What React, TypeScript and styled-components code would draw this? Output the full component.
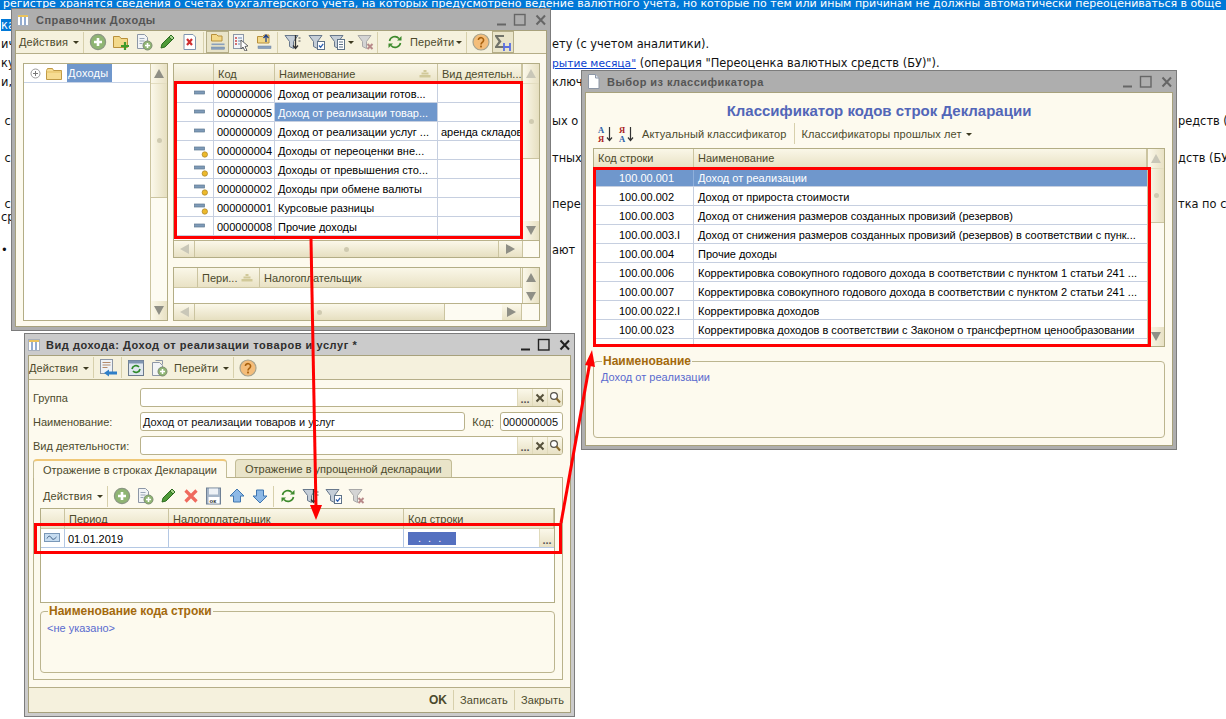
import React from 'react';
import styled, { createGlobalStyle } from 'styled-components';

const GlobalStyle = createGlobalStyle`
  html, body { margin: 0; padding: 0; background: #fff; overflow: hidden; }
  * { box-sizing: border-box; }
`;

const Page = styled.div`
  position: relative; width: 1226px; height: 719px; overflow: hidden; background: #fff;
  font-family: "Liberation Sans", Arial, sans-serif; font-size: 11px; color: #000;
`;

/* ---------- background document ---------- */
const Doc = styled.div`
  margin-top: -8px; font-family: "DejaVu Sans", sans-serif; font-size: 11.4px; color: #111;
`;
const DocLine = styled.div<{ $h?: number; $mt?: number }>`
  display: grid; grid-template-columns: 551px 626px 1fr;
  height: ${p => p.$h ?? 19}px; line-height: ${p => p.$h ?? 19}px; margin-top: ${p => p.$mt ?? 0}px;
  white-space: nowrap;
`;
const DocCell = styled.div` overflow: hidden; padding-left: 1px; `;
const Selected = styled.span` background: #0078d7; color: #fff; display: inline-block; `;
const TopSelected = styled.div`
  height: 18px; line-height: 23px; background: #0078d7; color: #fff; white-space: nowrap; padding-left: 3px; overflow: hidden;
  font-family: "DejaVu Sans", sans-serif; font-size: 11px;
`;
const DocLink = styled.a` color: #0a3fcf; text-decoration: underline; font-size: 10.7px; `;

/* ---------- window ---------- */
const Win = styled.div<{ $x: number; $y: number; $w: number; $h: number; $light?: boolean }>`
  position: absolute; left: ${p => p.$x}px; top: ${p => p.$y}px; width: ${p => p.$w}px; height: ${p => p.$h}px;
  display: flex; flex-direction: column; padding: 0 3px 3px;
  background: ${p => (p.$light ? '#cbcbcb' : '#aeaeae')};
  border: 1px solid #7c7c7c;
`;
const TitleBar = styled.div<{ $pl?: number; $gap?: number }>`
  height: 21px; flex: none; display: flex; align-items: center; gap: ${p => p.$gap ?? 7}px; padding: 0 0 0 ${p => p.$pl ?? 2}px;
`;
const TitleText = styled.div<{ $light?: boolean }>`
  flex: 1; font-weight: bold; font-size: 11px; color: ${p => (p.$light ? '#2e2e2e' : '#555')};
  white-space: nowrap; letter-spacing: ${p => (p.$light ? 0.55 : 0.45)}px;
`;
const WinBody = styled.div`
  flex: 1; min-height: 0; display: flex; flex-direction: column; background: #fdfaee; border: 1px solid #a7a17c;
`;

/* ---------- toolbars ---------- */
const ToolBar = styled.div<{ $h?: number; $border?: boolean; $flat?: boolean; $pl?: number }>`
  flex: none; height: ${p => p.$h ?? 24}px; display: flex; align-items: center; padding-left: ${p => p.$pl ?? 3}px;
  background: ${p => (p.$flat ? 'transparent' : '#f5f1dd')};
  border-bottom: ${p => (p.$border ? '1px solid #b5ae88' : 'none')};
  color: #4c4a2c; white-space: nowrap;
`;
const ToolText = styled.span<{ $pl?: number; $pr?: number }>`
  padding: 0 ${p => p.$pr ?? 0}px 0 ${p => p.$pl ?? 0}px; letter-spacing: 0.1px;
`;
const Caret = styled.span<{ $ml?: number }>`
  width: 0; height: 0; border: 3px solid transparent; border-top: 3px solid #3d3a20; border-bottom: 0;
  margin: 1px 2px 0 ${p => p.$ml ?? 5}px; flex: none;
`;
const Sep = styled.span` width: 1px; height: 21px; background: #d7d0ac; margin: 0 2px; flex: none; `;
const IconBtn = styled.span<{ $w?: number; $on?: boolean }>`
  width: ${p => p.$w ?? 23}px; height: 22px; flex: none; display: flex; align-items: center; justify-content: center;
  ${p => p.$on && 'background: #e9e4c9; border: 1px solid #b4ad87;'}
`;

/* ---------- scrollbars ---------- */
const VScroll = styled.div<{ $w?: number }>`
  flex: none; width: ${p => p.$w ?? 17}px; display: flex; flex-direction: column; background: #fdfbf2; border-left: 1px solid #cbc4a0;
`;
const VBtn = styled.div`
  flex: none; height: 19px; display: flex; align-items: center; justify-content: center;
  background: linear-gradient(90deg, #fbf8ea, #e8e1c4);
`;
const VThumb = styled.div<{ $h: number }>`
  flex: none; height: ${p => p.$h}px; display: flex; align-items: center; justify-content: center;
  background: linear-gradient(90deg, #fbf8ea, #e6dfc0); border-bottom: 1px solid #cbc4a0; border-top: 1px solid #e3ddc0;
`;
const Grip = styled.span` width: 5px; height: 5px; border-radius: 50%; background: #cfcab0; `;
const Spacer = styled.div` flex: 1; `;
const HScroll = styled.div`
  flex: none; height: 17px; display: flex; background: #fdfbf2; border-top: 1px solid #b9b28b;
`;
const HBtn = styled.div<{ $w: number }>`
  flex: none; width: ${p => p.$w}px; display: flex; align-items: center; justify-content: center;
  background: linear-gradient(180deg, #fbf8ea, #e8e1c4); border-right: 1px solid #cbc4a0;
`;
const HThumb = styled.div<{ $w: number }>`
  flex: none; width: ${p => p.$w}px; display: flex; align-items: center; justify-content: center;
  background: linear-gradient(180deg, #fbf8ea, #e6dfc0); border-right: 1px solid #cbc4a0;
`;
const HCorner = styled.div<{ $w: number }>` flex: none; width: ${p => p.$w}px; `;
const Arrow = styled.span<{ $dir: 'up' | 'down' | 'left' | 'right'; $dim?: boolean }>`
  width: 0; height: 0; border: 5px solid transparent;
  ${p => {
    const c = p.$dim ? '#c9c7b8' : '#8f8f86';
    if (p.$dir === 'up') return `border-top: 0; border-bottom: 9px solid ${c};`;
    if (p.$dir === 'down') return `border-bottom: 0; border-top: 9px solid ${c};`;
    if (p.$dir === 'left') return `border-left: 0; border-right: 9px solid ${c};`;
    return `border-right: 0; border-left: 9px solid ${c};`;
  }}
`;

/* ---------- grids ---------- */
const Panel = styled.div<{ $h?: number; $w?: number; $mt?: number }>`
  flex: ${p => (p.$h || p.$w ? 'none' : '1')}; min-height: 0; display: flex; flex-direction: column;
  ${p => p.$h && `height: ${p.$h}px;`} ${p => p.$w && `width: ${p.$w}px;`}
  margin-top: ${p => p.$mt ?? 0}px;
  border: 1px solid #b3ad85; background: #fff;
`;
const PanelMain = styled.div` flex: 1; min-height: 0; display: flex; `;
const GridArea = styled.div` flex: 1; min-width: 0; overflow: hidden; display: flex; flex-direction: column; `;
const HeadRow = styled.div<{ $cols: string; $h?: number }>`
  flex: none; display: grid; grid-template-columns: ${p => p.$cols}; height: ${p => p.$h ?? 20}px;
  background: linear-gradient(180deg, #faf7e8, #e9e2c5); border-bottom: 1px solid #cfc8a4;
  color: #4c4a2c;
`;
const HeadCell = styled.div`
  display: flex; align-items: center; justify-content: space-between; padding: 0 6px 0 4px; overflow: hidden;
  white-space: nowrap; border-right: 1px solid #cbc4a0;
`;
const Row = styled.div<{ $cols: string; $h?: number; $sel?: boolean; $line?: string }>`
  flex: none; display: grid; grid-template-columns: ${p => p.$cols}; height: ${p => p.$h ?? 19}px;
  border-bottom: 1px solid ${p => p.$line ?? '#c6cfe0'};
  ${p => p.$sel && 'background: #6f97cc; color: #fff;'}
`;
const Cell = styled.div<{ $sel?: boolean; $pl?: number; $line?: string }>`
  display: flex; align-items: center; padding: 1px 0 0 ${p => p.$pl ?? 3}px; overflow: hidden; white-space: nowrap;
  border-right: 1px solid ${p => p.$line ?? '#c6cfe0'};
  ${p => p.$sel && 'background: #6f97cc; color: #fff;'}
`;
const IconCell = styled(Cell)<{ $pr?: number }>` justify-content: flex-end; padding: 0 ${p => p.$pr ?? 5}px 0 0; `;

/* ---------- tree ---------- */
const TreeRow = styled.div`
  flex: none; height: 19px; display: flex; align-items: center; padding-left: 6px; gap: 5px; border-bottom: 1px solid #c6d2e6;
`;
const TreeLabel = styled.span` background: #6f97cc; color: #fff; height: 18px; line-height: 18px; padding: 0 4px 0 1px; letter-spacing: .2px;`;

/* ---------- form ---------- */
const Form = styled.div` flex: none; display: flex; flex-direction: column; gap: 5px; padding: 8px 7px 0 4px; `;
const FormRow = styled.div` height: 19px; display: flex; align-items: center; `;
const Label = styled.div<{ $w?: number; $ml?: number }>`
  width: ${p => (p.$w ? `${p.$w}px` : 'auto')}; flex: none; color: #4c4a2c; margin-left: ${p => p.$ml ?? 0}px; white-space: nowrap;
`;
const InputBox = styled.div<{ $w?: number; $ml?: number }>`
  ${p => (p.$w ? `width: ${p.$w}px; flex: none;` : 'flex: 1;')} height: 19px; display: flex; align-items: center;
  margin-left: ${p => p.$ml ?? 0}px;
  background: #fff; border: 1px solid #b9b28b; border-radius: 3px; padding-left: 2px; overflow: hidden; white-space: nowrap;
`;
const InputValue = styled.div` flex: 1; color: #111; `;
const FieldBtn = styled.div<{ $h?: number }>`
  flex: none; width: 15px; height: ${p => p.$h ?? 17}px; display: flex; align-items: center; justify-content: center;
  background: linear-gradient(180deg, #fbf8ea, #e8e1c4); border-left: 1px solid #e0dabb;
  font-weight: bold; color: #4c4a2c; line-height: 1;
`;
const Dots = styled.span` font-size: 11px; letter-spacing: 0; transform: translateY(2px); color: #555; `;

/* ---------- tabs ---------- */
const TabBar = styled.div` flex: none; display: flex; gap: 8px; margin: 4px 7px 0 4px; height: 18px; `;
const Tab = styled.div<{ $on?: boolean }>`
  padding: 0 9px; display: flex; align-items: center; border: 1px solid #c2bc96; border-bottom: 0; border-radius: 4px 4px 0 0;
  color: #4c4a2c; position: relative; z-index: ${p => (p.$on ? 1 : 0)};
  background: ${p => (p.$on ? '#fdfaee' : '#e9e4c9')};
  ${p => p.$on && 'border-top: 2px solid #f0c878; margin-bottom: -1px;'}
`;
const TabPane = styled.div`
  flex: none; height: 203px; margin: 0 7px 0 4px; border: 1px solid #b9b28b; padding: 6px 7px 6px 6px; display: flex; flex-direction: column;
`;
const Group = styled.fieldset<{ $h: number; $mt: number; $pl?: number }>`
  flex: none; height: ${p => p.$h}px; margin: ${p => p.$mt}px 0 0; padding: 0 0 0 ${p => p.$pl ?? 6}px; border: 1px solid #bcb58f; border-radius: 4px; min-width: 0;
`;
const Legend = styled.legend`
  font-weight: bold; color: #a3690c; padding: 0 1px; margin-left: 1px; font-size: 12px; line-height: 13px; white-space: nowrap;
`;
const GroupText = styled.div<{ $mt?: number }>` color: #5a6bcf; margin-top: ${p => p.$mt ?? 3}px; `;
const BottomBar = styled.div`
  flex: none; margin-top: auto; height: 25px; display: flex; justify-content: flex-end; align-items: center;
  background: #f5f1dd; border-top: 1px solid #b5ae88; color: #4c4a2c;
`;
const BarBtn = styled.span<{ $bold?: boolean }>`
  padding: 0 6px; font-weight: ${p => (p.$bold ? 'bold' : 'normal')}; font-size: ${p => (p.$bold ? 12 : 11)}px; letter-spacing: .1px;
  border-left: ${p => (p.$bold ? 'none' : '1px solid #d7d0ac')}; line-height: 20px;
`;
const Masked = styled.div`
  width: 48px; height: 13px; background: #5470c0; color: #fff; font-size: 11px; letter-spacing: 2px; padding-left: 10px; line-height: 12px;
`;
const EditCell = styled(Cell)` justify-content: space-between; padding: 0 0 0 4px; border-right: 0; `;

/* ---------- layouts of windows ---------- */
const ListLayout = styled.div` flex: 1; min-height: 0; display: flex; gap: 5px; padding: 9px 6px 5px 7px; `;
const RightCol = styled.div` flex: 1; min-width: 0; display: flex; flex-direction: column; gap: 9px; `;
const Heading = styled.div`
  flex: none; height: 32px; padding-top: 9px; text-align: center; font-weight: bold; font-size: 15px; line-height: 17px; color: #5266b8;
`;
const ClassBody = styled.div` flex: 1; min-height: 0; display: flex; flex-direction: column; padding: 0 7px 6px 7px; `;
const BlankFill = styled.div` flex: 1; `;

/* ---------- annotations ---------- */
const RedFrame = styled.div<{ $x: number; $y: number; $w: number; $h: number }>`
  position: absolute; left: ${p => p.$x}px; top: ${p => p.$y}px; width: ${p => p.$w}px; height: ${p => p.$h}px; border: 3px solid #ff0000; pointer-events: none;
`;
const ArrowLayer = styled.svg` position: absolute; left: 0; top: 0; pointer-events: none; `;

/* ---------- icons ---------- */
const S = ({ w = 18, h = 18, children }: { w?: number; h?: number; children: React.ReactNode }) => (
  <svg width={w} height={h} viewBox={`0 0 ${w} ${h}`} style={{ display: 'block', flex: 'none' }}>{children}</svg>
);
const GridIcon = () => (
  <S w={12} h={12}>
    <rect x=".5" y=".5" width="11" height="11" fill="#fff" stroke="#a8b0bc" />
    <rect x="1" y="1" width="10" height="2" fill="#e9c25c" />
    <path d="M4 3v8M8 3v8" stroke="#5a80b8" strokeWidth="1.3" />
  </S>
);
const DocTitleIcon = () => (
  <S w={13} h={15}>
    <path d="M1.5.5h7l3.5 3.5v10.5h-10.5z" fill="#fff" stroke="#8d97a6" />
    <path d="M8.5.5v3.5h3.5" fill="#dfe6f0" stroke="#8d97a6" />
  </S>
);
const WinBtns = ({ color }: { color: string }) => (
  <S w={54} h={16}>
    <path d="M4 12.5h9" stroke={color} strokeWidth="2" />
    <rect x="21.5" y="2.5" width="10.5" height="10.5" fill="none" stroke={color} strokeWidth="1.4" />
    <path d="M43.5 3.5l8.5 9M52 3.5l-8.5 9" stroke={color} strokeWidth="2" />
  </S>
);
const PlusCircle = () => (
  <S>
    <circle cx="9" cy="9" r="7.6" fill="#8fb573" stroke="#8a9782" strokeWidth="1.2" />
    <path d="M9 5v8M5 9h8" stroke="#fff" strokeWidth="2.6" />
  </S>
);
const FolderPlus = () => (
  <S>
    <path d="M1.5 3.5h6l1.5 2h6.5v9h-14z" fill="#f3d98a" stroke="#b8903a" />
    <path d="M13 9v8M9 13h8" stroke="#3f9b2c" strokeWidth="2.2" />
  </S>
);
const DocPlus = () => (
  <S>
    <path d="M2.5 1.5h7l3 3v11h-10z" fill="#f2f4f6" stroke="#8d97a6" />
    <path d="M4.5 5.5h5M4.5 8h5M4.5 10.5h3" stroke="#9aa6b8" />
    <circle cx="12.5" cy="12.5" r="4.5" fill="#8fb573" stroke="#7c8c70" />
    <path d="M12.5 10v5M10 12.5h5" stroke="#fff" strokeWidth="1.6" />
  </S>
);
const Pencil = () => (
  <S>
    <path d="M3 15l1-4 7-7 3 3-7 7z" fill="#4f9a38" stroke="#2d6c20" />
    <path d="M11 4l2-2 3 3-2 2z" fill="#a7d48c" stroke="#2d6c20" />
  </S>
);
const DocX = () => (
  <S>
    <path d="M3 1.5h9l2.5 2.5v12.5h-11.5z" fill="#fff" stroke="#7f95b0" />
    <path d="M6 6l5 6M11 6l-5 6" stroke="#d03030" strokeWidth="2.2" />
  </S>
);
const ListOn = () => (
  <S>
    <path d="M2.5 1.5h5l1.5 1.5h4v5h-10.5z" fill="#f3d98a" stroke="#b8903a" />
    <rect x="2.5" y="10.5" width="13" height="1.6" fill="#8aa0bc" />
    <rect x="2.5" y="14" width="13" height="2.2" fill="#8aa0bc" stroke="#6f86a3" strokeWidth=".5" />
  </S>
);
const DocCursor = () => (
  <S>
    <rect x="1.5" y="1.5" width="10" height="14" fill="#f3f5f8" stroke="#8d97a6" />
    <path d="M3 5h2M3 8h2M3 11h2" stroke="#c44" strokeWidth="1.4" />
    <path d="M6 5h4M6 8h3M6 11h2" stroke="#6c89b0" />
    <path d="M9 7l7 6-3 .5 2 4-2 .5-2-4-2 2z" fill="#fff" stroke="#555" strokeWidth=".9" />
  </S>
);
const FolderArrow = () => (
  <S>
    <path d="M2.5 3.5h5l1.5-1.5h5v8h-11.5z" fill="#f3d98a" stroke="#b8903a" />
    <path d="M11 9V3M8.5 5l2.5-3 2.5 3" fill="none" stroke="#1f3f88" strokeWidth="1.3" />
    <rect x="3" y="13" width="13" height="2.6" fill="#8aa0bc" stroke="#6f86a3" strokeWidth=".5" />
  </S>
);
const Funnel = ({ mark, dim }: { mark?: 'list' | 'check' | 'x' | 'down'; dim?: boolean }) => (
  <S>
    <path d="M1 2.5h13l-4.5 6v7l-4-2v-5z" fill={dim ? '#d4d4d4' : '#c5ced8'} stroke={dim ? '#a8a8a8' : '#68788c'} />
    {mark === 'list' && <g><rect x="8.5" y="6.5" width="7" height="10" fill="#fff" stroke="#5e7288" /><path d="M10 9h4M10 11.5h4M10 14h4" stroke="#5e7288" /></g>}
    {mark === 'down' && <g><path d="M11.5 2v13M9 12.5l2.5 3 2.5-3" fill="none" stroke="#333" strokeWidth="1.3" /><path d="M14.5 5h2M14.5 8h2" stroke="#555" /></g>}
    {mark === 'check' && <g><rect x="9.5" y="8.5" width="7" height="8" fill="#fff" stroke="#5e7288" /><path d="M11 12.5l1.6 1.8 2.6-3.4" fill="none" stroke="#2c5fae" strokeWidth="1.3" /></g>}
    {mark === 'x' && <path d="M10.5 11l5 5M15.5 11l-5 5" stroke="#b88a8a" strokeWidth="2" />}
  </S>
);
const Refresh = () => (
  <S>
    <path d="M3.5 8a5.5 5.5 0 0 1 9.5-2.5" fill="none" stroke="#3d8a2c" strokeWidth="1.6" />
    <path d="M14.5 10a5.5 5.5 0 0 1-9.5 2.5" fill="none" stroke="#3d8a2c" strokeWidth="1.6" />
    <path d="M15.5 3v4.5H11z" fill="#3d8a2c" />
    <path d="M2.5 15v-4.5H7z" fill="#3d8a2c" />
  </S>
);
const Help = () => (
  <S>
    <circle cx="9" cy="9" r="8" fill="#f4bd7a" stroke="#a5a28e" strokeWidth="1.2" />
    <path d="M6.4 7a2.6 2.4 0 1 1 4.4 1.8C9.8 9.6 9 10 9 11.5" fill="none" stroke="#a8600d" strokeWidth="1.6" />
    <rect x="8.1" y="12.6" width="1.8" height="1.8" fill="#a8600d" />
  </S>
);
const SigmaH = () => (
  <S w={20} h={20}>
    <path d="M2 3h9v2H5l3.5 4.5L5 14h6v2H2v-1.5L5.5 9.5 2 4.5z" fill="#72746a" />
    <path d="M11 11v8M17 11v8M11 15h6" stroke="#5a6fe0" strokeWidth="1.8" />
  </S>
);
const BackDoc = () => (
  <S w={20} h={18}>
    <rect x="2.5" y=".5" width="12" height="14" fill="#eef2f6" stroke="#8d97a6" />
    <path d="M4.5 3.5h8M4.5 6h8M4.5 8.5h5" stroke="#b48a6a" />
    <path d="M6 14l5-3.5v2h8v3h-8v2z" fill="#2f7fc8" />
  </S>
);
const RefreshBox = () => (
  <S>
    <rect x="1.5" y="1.5" width="15" height="15" fill="#dfe7ef" stroke="#6b7a8c" />
    <path d="M1.5 1.5h15v3h-15z" fill="#7f95b0" />
    <path d="M5 10a4 4 0 0 1 7-2M13 10a4 4 0 0 1-7 2" fill="none" stroke="#2f8a2a" strokeWidth="1.7" />
  </S>
);
const CopyPlus = () => (
  <S>
    <path d="M5.5 1.5h7v4" fill="none" stroke="#8d97a6" />
    <path d="M2.5 3.5h7l3 3v10h-10z" fill="#f2f4f6" stroke="#8d97a6" />
    <circle cx="12.5" cy="12.5" r="4.5" fill="#8fb573" stroke="#7c8c70" />
    <path d="M12.5 10v5M10 12.5h5" stroke="#fff" strokeWidth="1.6" />
  </S>
);
const BigX = () => (
  <S><path d="M3.5 3.5l11 11M14.5 3.5l-11 11" stroke="#ef6a5e" strokeWidth="3.2" /></S>
);
const SaveOk = () => (
  <S>
    <rect x="1.5" y="1" width="14" height="16" fill="#a6b6c8" stroke="#6f8094" />
    <rect x="4" y="1.5" width="9" height="6" fill="#eef2f6" />
    <rect x="3.5" y="10" width="11" height="6.5" fill="#fff" />
    <text x="4.5" y="16" fontSize="6" fontWeight="bold" fontFamily="Liberation Sans, sans-serif" fill="#333">ок</text>
  </S>
);
const UpArrow = () => (
  <S><path d="M9 2l7 7h-3.5v6h-7V9H2z" fill="#8db9e6" stroke="#3f76b0" /></S>
);
const DownArrow = () => (
  <S><path d="M9 16L2 9h3.5V3h7v6H16z" fill="#8db9e6" stroke="#3f76b0" /></S>
);
const SortAZ = ({ flip }: { flip?: boolean }) => (
  <S w={18} h={18}>
    <text x="1" y="8" fontSize="8.5" fontWeight="bold" fontFamily="Liberation Serif, serif" fill={flip ? '#a22' : '#2a5ea8'}>{flip ? 'Я' : 'A'}</text>
    <text x="1" y="16.5" fontSize="8.5" fontWeight="bold" fontFamily="Liberation Serif, serif" fill={flip ? '#2a5ea8' : '#a22'}>{flip ? 'A' : 'Я'}</text>
    <path d="M12.5 2v13M10 12.5l2.5 3 2.5-3" fill="none" stroke="#333" strokeWidth="1.2" />
  </S>
);
const ItemIcon = ({ ring }: { ring?: boolean }) => (
  <S w={15} h={16}>
    <rect x="1.5" y={ring ? 5 : 6} width="10" height="3" fill="#7e9ab8" stroke="#5d7890" strokeWidth=".7" />
    {ring && <circle cx="11.8" cy="12.5" r="2.7" fill="#ecb92c" stroke="#a8822a" strokeWidth=".7" />}
  </S>
);
const PeriodIcon = () => (
  <S w={16} h={10}>
    <rect x=".5" y=".5" width="15" height="8" fill="#c6dcf0" stroke="#7a98b8" />
    <path d="M3 5.5c1.5-3 3-3 4.5-.5s3 1 5-1" fill="none" stroke="#3a5a80" />
  </S>
);
const SortMark = () => (
  <S w={12} h={9}>
    <path d="M4.5 1h3v2h-3zM2.5 3.5h7v2h-7zM.5 6h11v2.4h-11z" fill="#d1c999" />
  </S>
);
const Magnifier = () => (
  <S w={12} h={13}>
    <circle cx="5" cy="5" r="3.4" fill="#fff" stroke="#55524a" strokeWidth="1.2" />
    <path d="M7.5 7.5L11 11.5" stroke="#8a6c2e" strokeWidth="2" />
  </S>
);
const Clear = () => (
  <S w={10} h={10}><path d="M1.5 1.5l7 7M8.5 1.5l-7 7" stroke="#55503a" strokeWidth="2" /></S>
);
const Expand = () => (
  <S w={11} h={11}>
    <circle cx="5.5" cy="5.5" r="4.5" fill="#fff" stroke="#9a9a9a" />
    <path d="M3 5.5h5M5.5 3v5" stroke="#777" />
  </S>
);
const TreeFolder = () => (
  <S w={16} h={13}>
    <path d="M.5 3.5l1-2h5l1 2h8v9h-15z" fill="#f6dc92" stroke="#c09a45" />
    <path d="M.5 5h15" stroke="#e3bf62" />
  </S>
);

/* ---------- data ---------- */
const incomeCols = '40px 61px 163px 1fr';
const incomes = [
  { code: '000000006', name: 'Доход от реализации готов...', kind: '', ring: false },
  { code: '000000005', name: 'Доход от реализации товар...', kind: '', ring: false, sel: true },
  { code: '000000009', name: 'Доход от реализации услуг ...', kind: 'аренда складов', ring: false },
  { code: '000000004', name: 'Доходы от переоценки вне...', kind: '', ring: true },
  { code: '000000003', name: 'Доходы от превышения сто...', kind: '', ring: true },
  { code: '000000002', name: 'Доходы при обмене валюты', kind: '', ring: true },
  { code: '000000001', name: 'Курсовые разницы', kind: '', ring: true },
  { code: '000000008', name: 'Прочие доходы', kind: '', ring: false },
  { code: '000000007', name: '', kind: '', ring: false },
];
const classCols = '100px 1fr';
const classifier = [
  ['100.00.001', 'Доход от реализации'],
  ['100.00.002', 'Доход от прироста стоимости'],
  ['100.00.003', 'Доход от снижения размеров созданных провизий (резервов)'],
  ['100.00.003.I', 'Доход от снижения размеров созданных провизий (резервов) в соответствии с пунк...'],
  ['100.00.004', 'Прочие доходы'],
  ['100.00.006', 'Корректировка совокупного годового дохода в соответствии с пунктом 1 статьи 241 ...'],
  ['100.00.007', 'Корректировка совокупного годового дохода в соответствии с пунктом 2 статьи 241 ...'],
  ['100.00.022.I', 'Корректировка доходов'],
  ['100.00.023', 'Корректировка доходов в соответствии с Законом о трансфертном ценообразовании'],
  ['100.00.024', ''],
];
const rateCols = '24px 62px 261px 1fr';
const lineCols = '24px 104px 235px 1fr';
const lineBlue = '#b4c8e4';

const VBar = ({ thumb, dimUp }: { thumb: number; dimUp?: boolean }) => (
  <VScroll>
    <VBtn><Arrow $dir="up" $dim={dimUp} /></VBtn>
    <VThumb $h={thumb}><Grip /></VThumb>
    <Spacer />
    <VBtn><Arrow $dir="down" /></VBtn>
  </VScroll>
);
const HBar = ({ thumb, left, right, corner }: { thumb: number; left: number; right: number; corner: number }) => (
  <HScroll>
    <HBtn $w={left}><Arrow $dir="left" $dim /></HBtn>
    <HThumb $w={thumb}><Grip /></HThumb>
    <Spacer />
    <HBtn $w={right}><Arrow $dir="right" /></HBtn>
    <HCorner $w={corner} />
  </HScroll>
);
const SelectField = () => (
  <InputBox>
    <InputValue />
    <FieldBtn><Dots>...</Dots></FieldBtn>
    <FieldBtn><Clear /></FieldBtn>
    <FieldBtn><Magnifier /></FieldBtn>
  </InputBox>
);

export default function App() {
  return (
    <Page>
      <GlobalStyle />
      <Doc>
        <TopSelected>регистре хранятся сведения о счетах бухгалтерского учета, на которых предусмотрено ведение валютного учета, но которые по тем или иным причинам не должны автоматически переоцениваться в обще</TopSelected>
        <DocLine $h={12} $mt={9}><DocCell><Selected>ка</Selected></DocCell></DocLine>
        <DocLine $mt={4}><DocCell>ич</DocCell><DocCell>ету (с учетом аналитики).</DocCell></DocLine>
        <DocLine><DocCell>ку</DocCell><DocCell><DocLink>рытие месяца"</DocLink> (операция "Переоценка валютных средств (БУ)").</DocCell></DocLine>
        <DocLine><DocCell>и,</DocCell><DocCell>ключ</DocCell></DocLine>
        <DocLine $mt={20}><DocCell>&nbsp;с</DocCell><DocCell>ых о</DocCell><DocCell>редств (</DocCell></DocLine>
        <DocLine $mt={18}><DocCell>&nbsp;с</DocCell><DocCell>тных</DocCell><DocCell>дств (БУ</DocCell></DocLine>
        <DocLine $mt={27}><DocCell>&nbsp;с</DocCell><DocCell>перес</DocCell><DocCell>тка по сч</DocCell></DocLine>
        <DocLine $mt={-6}><DocCell>ср</DocCell></DocLine>
        <DocLine $mt={14}><DocCell>• с</DocCell><DocCell>ают</DocCell></DocLine>
      </Doc>

      <Win $x={11} $y={8} $w={540} $h={323}>
        <TitleBar>
          <GridIcon />
          <TitleText>Справочник Доходы</TitleText>
          <WinBtns color="#666" />
        </TitleBar>
        <WinBody>
          <ToolBar $h={23} $border>
            <ToolText>Действия</ToolText><Caret />
            <Sep />
            <IconBtn><PlusCircle /></IconBtn>
            <IconBtn><FolderPlus /></IconBtn>
            <IconBtn><DocPlus /></IconBtn>
            <IconBtn><Pencil /></IconBtn>
            <IconBtn><DocX /></IconBtn>
            <Sep />
            <IconBtn $on><ListOn /></IconBtn>
            <IconBtn><DocCursor /></IconBtn>
            <IconBtn><FolderArrow /></IconBtn>
            <Sep />
            <IconBtn $w={25}><Funnel mark="down" /></IconBtn>
            <IconBtn><Funnel mark="check" /></IconBtn>
            <IconBtn $w={20}><Funnel mark="list" /></IconBtn><Caret $ml={0} />
            <IconBtn $w={19}><Funnel mark="x" dim /></IconBtn>
            <Sep />
            <IconBtn $w={30}><Refresh /></IconBtn>
            <ToolText>Перейти</ToolText><Caret $ml={2} />
            <Sep />
            <IconBtn><Help /></IconBtn>
            <IconBtn $w={22} $on><SigmaH /></IconBtn>
          </ToolBar>
          <ListLayout>
            <Panel $w={145}>
              <PanelMain>
                <GridArea>
                  <TreeRow><Expand /><TreeFolder /><TreeLabel>Доходы</TreeLabel></TreeRow>
                </GridArea>
                <VBar thumb={115} />
              </PanelMain>
            </Panel>
            <RightCol>
              <Panel $h={195}>
                <PanelMain>
                  <GridArea>
                    <HeadRow $cols={incomeCols}>
                      <HeadCell /><HeadCell>Код</HeadCell>
                      <HeadCell>Наименование<SortMark /></HeadCell>
                      <HeadCell>Вид деятельн...</HeadCell>
                    </HeadRow>
                    {incomes.map(r => (
                      <Row key={r.code} $cols={incomeCols}>
                        <IconCell><ItemIcon ring={r.ring} /></IconCell>
                        <Cell>{r.code}</Cell>
                        <Cell $sel={r.sel}>{r.name}</Cell>
                        <Cell>{r.kind}</Cell>
                      </Row>
                    ))}
                  </GridArea>
                  <VBar thumb={76} dimUp />
                </PanelMain>
                <HBar left={21} thumb={304} right={24} corner={17} />
              </Panel>
              <Panel $h={54}>
                <PanelMain>
                  <GridArea>
                    <HeadRow $cols={rateCols}>
                      <HeadCell />
                      <HeadCell>Пери...<SortMark /></HeadCell>
                      <HeadCell>Налогоплательщик</HeadCell>
                      <span />
                    </HeadRow>
                  </GridArea>
                  <VScroll>
                    <VBtn><Arrow $dir="up" /></VBtn>
                    <VBtn><Arrow $dir="down" /></VBtn>
                  </VScroll>
                </PanelMain>
                <HBar left={21} thumb={250} right={20} corner={17} />
              </Panel>
            </RightCol>
          </ListLayout>
        </WinBody>
      </Win>

      <Win $x={24} $y={333} $w={551} $h={384} $light>
        <TitleBar $pl={0} $gap={6}>
          <GridIcon />
          <TitleText $light>Вид дохода: Доход от реализации товаров и услуг *</TitleText>
          <WinBtns color="#222" />
        </TitleBar>
        <WinBody>
          <ToolBar $h={24} $border $pl={0}>
            <ToolText>Действия</ToolText><Caret />
            <Sep />
            <IconBtn><BackDoc /></IconBtn>
            <Sep />
            <IconBtn><RefreshBox /></IconBtn>
            <IconBtn><CopyPlus /></IconBtn>
            <ToolText $pl={4}>Перейти</ToolText><Caret />
            <Sep />
            <IconBtn $w={24}><Help /></IconBtn>
          </ToolBar>
          <Form>
            <FormRow><Label $w={107}>Группа</Label><SelectField /></FormRow>
            <FormRow>
              <Label $w={107}>Наименование:</Label>
              <InputBox><InputValue>Доход от реализации товаров и услуг</InputValue></InputBox>
              <Label $ml={7}>Код:</Label>
              <InputBox $w={63} $ml={6}><InputValue>000000005</InputValue></InputBox>
            </FormRow>
            <FormRow><Label $w={107}>Вид деятельности:</Label><SelectField /></FormRow>
          </Form>
          <TabBar>
            <Tab $on>Отражение в строках Декларации</Tab>
            <Tab>Отражение в упрощенной декларации</Tab>
          </TabBar>
          <TabPane>
            <ToolBar $h={24} $flat>
              <ToolText>Действия</ToolText><Caret />
              <Sep />
              <IconBtn><PlusCircle /></IconBtn>
              <IconBtn><DocPlus /></IconBtn>
              <IconBtn><Pencil /></IconBtn>
              <IconBtn><BigX /></IconBtn>
              <IconBtn><SaveOk /></IconBtn>
              <IconBtn><UpArrow /></IconBtn>
              <IconBtn><DownArrow /></IconBtn>
              <Sep />
              <IconBtn><Refresh /></IconBtn>
              <IconBtn><Funnel mark="down" /></IconBtn>
              <IconBtn><Funnel mark="check" /></IconBtn>
              <IconBtn><Funnel mark="x" dim /></IconBtn>
            </ToolBar>
            <Panel $h={95}>
              <GridArea>
                <HeadRow $cols={lineCols}>
                  <HeadCell /><HeadCell>Период</HeadCell><HeadCell>Налогоплательщик</HeadCell><HeadCell>Код строки</HeadCell>
                </HeadRow>
                <Row $cols={lineCols} $line={lineBlue}>
                  <IconCell $line={lineBlue} $pr={4}><PeriodIcon /></IconCell>
                  <Cell $line={lineBlue}>01.01.2019</Cell>
                  <Cell $line={lineBlue} />
                  <EditCell><Masked>. . .</Masked><FieldBtn $h={18}><Dots>...</Dots></FieldBtn></EditCell>
                </Row>
                <BlankFill />
              </GridArea>
            </Panel>
            <Group $h={68} $mt={2}>
              <Legend>Наименование кода строки</Legend>
              <GroupText $mt={4}>&lt;не указано&gt;</GroupText>
            </Group>
          </TabPane>
          <BottomBar>
            <BarBtn $bold>OK</BarBtn>
            <BarBtn>Записать</BarBtn>
            <BarBtn>Закрыть</BarBtn>
          </BottomBar>
        </WinBody>
      </Win>

      <Win $x={581} $y={70} $w={596} $h={380}>
        <TitleBar>
          <DocTitleIcon />
          <TitleText>Выбор из классификатора</TitleText>
          <WinBtns color="#666" />
        </TitleBar>
        <WinBody>
          <ClassBody>
            <Heading>Классификатор кодов строк Декларации</Heading>
            <ToolBar $h={17} $flat $pl={2}>
              <IconBtn $w={21}><SortAZ /></IconBtn>
              <IconBtn $w={21}><SortAZ flip /></IconBtn>
              <ToolText $pl={5} $pr={5}>Актуальный классификатор</ToolText>
              <Sep />
              <ToolText $pl={5}>Классификаторы прошлых лет</ToolText><Caret $ml={4} />
            </ToolBar>
            <Panel $h={199} $mt={6}>
              <PanelMain>
                <GridArea>
                  <HeadRow $cols={classCols} $h={19}>
                    <HeadCell>Код строки</HeadCell><HeadCell>Наименование</HeadCell>
                  </HeadRow>
                  {classifier.map((r, i) => (
                    <Row key={r[0]} $cols={classCols} $sel={i === 0}>
                      <Cell $pl={25} $line={i === 0 ? '#8fb0dc' : undefined}>{r[0]}</Cell>
                      <Cell $pl={4} $line="transparent">{r[1]}</Cell>
                    </Row>
                  ))}
                </GridArea>
                <VBar thumb={55} dimUp />
              </PanelMain>
            </Panel>
            <Group $h={83} $mt={8} $pl={7}>
              <Legend>Наименование</Legend>
              <GroupText>Доход от реализации</GroupText>
            </Group>
          </ClassBody>
        </WinBody>
      </Win>

      <RedFrame $x={174} $y={81} $w={349} $h={158} />
      <RedFrame $x={34} $y={523} $w={528} $h={31} />
      <RedFrame $x={593} $y={167} $w={558} $h={180} />
      <ArrowLayer width={1226} height={719}>
        <path d="M311 239L316 508" stroke="#f00" strokeWidth="3" fill="none" />
        <path d="M310 505h12l-6 15z" fill="#f00" />
        <path d="M561 523L590 362" stroke="#f00" strokeWidth="3" fill="none" />
        <path d="M585 365l10 2 -3 -17z" fill="#f00" />
      </ArrowLayer>
    </Page>
  );
}
